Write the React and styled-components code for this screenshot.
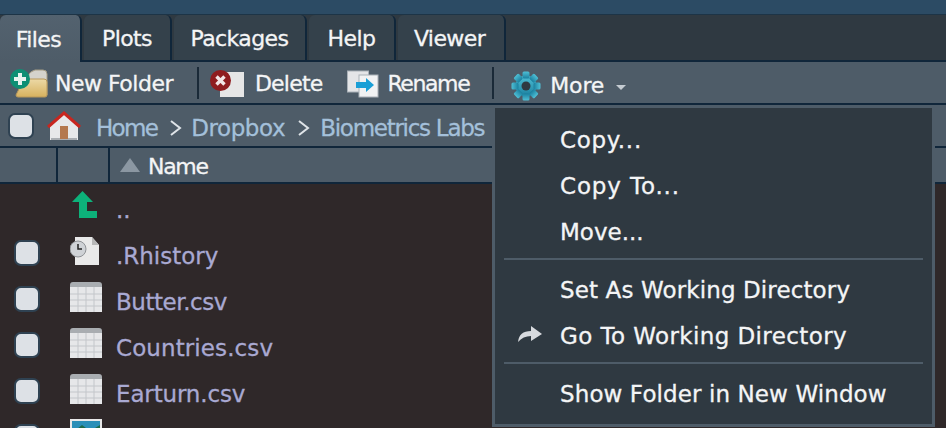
import React from "react";
import styled, { createGlobalStyle } from "styled-components";

const Global = createGlobalStyle`
  html, body { margin: 0; padding: 0; background: #2f2829; }
  * { box-sizing: border-box; }
`;

const Page = styled.div`
  position: relative;
  width: 946px;
  height: 428px;
  overflow: hidden;
  background: #2f2829;
  font-family: "DejaVu Sans", "Liberation Sans", sans-serif;
  font-size: 23px;
  color: #f4f5f6;
  -webkit-text-stroke: 0.3px currentColor;
`;
const TopBand = styled.div`
  height: 14px;
  background: #2c4b64;
  border-bottom: 1px solid #1d3446;
  box-sizing: content-box;
`;
const TabBar = styled.div`
  height: 47px;
  display: flex;
  gap: 2px;
  background: #2f3941;
  border-bottom: 2px solid #10263a;
`;
const Tab = styled.div`
  width: ${(p) => p.$w}px;
  height: ${(p) => (p.$active ? 47 : 45)}px;
  display: flex;
  align-items: center;
  justify-content: center;
  padding-top: 2px;
  padding-right: ${(p) => p.$pr || 0}px;
  border-radius: 6px 6px 0 0;
  background: ${(p) => (p.$active ? "linear-gradient(#53626f,#4e5c68)" : "#34414b")};
  border-right: 2px solid #10263a;
  font-size: 22px;
  letter-spacing: -0.6px;
  position: relative;
  z-index: 1;
`;
const Toolbar = styled.div`
  height: 43px;
  display: flex;
  align-items: center;
  padding-top: 2px;
  background: #4e5c68;
  border-bottom: 2px solid #10263a;
  font-size: 22px;
`;
const ToolItem = styled.div`
  display: flex;
  align-items: center;
  margin-left: ${(p) => p.$ml}px;
  margin-top: ${(p) => p.$mt || 0}px;
  gap: ${(p) => p.$gap}px;
  letter-spacing: ${(p) => p.$ls}px;
`;
const Divider = styled.div`
  width: 2px;
  height: 32px;
  margin-left: ${(p) => p.$ml}px;
  margin-top: -2px;
  background: #1a2a38;
`;
const Caret = styled.span`
  width: 0;
  height: 0;
  margin-left: 3px;
  margin-top: 4px;
  border-left: 5px solid transparent;
  border-right: 5px solid transparent;
  border-top: 5px solid #c5ccd2;
`;
const Crumbs = styled.div`
  height: 43px;
  display: flex;
  align-items: center;
  padding-left: 8px;
  background: #4e5c68;
  border-bottom: 2px solid #10263a;
  color: #a4c0da;
`;
const Check = styled.span`
  width: 26px;
  height: 26px;
  flex: none;
  border-radius: 7px;
  background: #dde1e6;
  border: 2px solid #2f4252;
`;
const CrumbLink = styled.span`
  margin-left: ${(p) => p.$ml}px;
  padding-top: 4px;
  letter-spacing: ${(p) => p.$ls}px;
`;
const Chevron = styled.svg`
  width: 14px;
  height: 18px;
  margin-left: 12px;
  margin-right: -3px;
  margin-top: 4px;
`;
const Header = styled.div`
  height: 36px;
  display: grid;
  grid-template-columns: 58px 52px 1fr;
  background: #4e5c68;
  border-bottom: 2px solid #10263a;
  font-size: 22px;
  letter-spacing: -1.3px;
`;
const HeaderCell = styled.div`
  display: flex;
  align-items: center;
  padding-left: 10px;
  padding-top: 3px;
  gap: 8px;
  border-right: ${(p) => (p.$last ? "none" : "2px solid #10263a")};
`;
const SortUp = styled.span`
  width: 0;
  height: 0;
  border-left: 10px solid transparent;
  border-right: 10px solid transparent;
  border-bottom: 14px solid #8b97a2;
  margin-top: -4px;
`;
const Row = styled.div`
  height: 46px;
  display: grid;
  grid-template-columns: 58px 58px 1fr;
  align-items: center;
`;
const CheckCell = styled.div`
  padding-left: 14px;
  display: flex;
`;
const IconCell = styled.div`
  display: flex;
  padding-left: 12px;
  margin-top: -5px;
`;
const FileName = styled.span`
  color: #a9a9d2;
  padding-top: 5px;
  letter-spacing: ${(p) => p.$ls}px;
`;
const Menu = styled.div`
  position: absolute;
  left: 492px;
  top: 106px;
  width: 443px;
  height: 321px;
  background: #2f3941;
  border: 3px solid #4e5c68;
  border-top-width: 2px;
  padding: 9px 9px 0;
  z-index: 5;
`;
const MenuItem = styled.div`
  height: 46px;
  display: flex;
  align-items: center;
  padding-left: 56px;
  position: relative;
  letter-spacing: ${(p) => p.$ls}px;
`;
const MenuIcon = styled.svg`
  position: absolute;
  left: 13px;
  top: 11px;
`;
const MenuSep = styled.div`
  height: 2px;
  margin: 3px 0 7px;
  background: #4e5c68;
`;

const NewFolderIcon = () => (
  <svg width="38" height="29" viewBox="0 0 38 29">
    <defs>
      <linearGradient id="folderG" x1="0" y1="0" x2="0" y2="1">
        <stop offset="0" stopColor="#ecd9a6" />
        <stop offset="1" stopColor="#d6b15e" />
      </linearGradient>
    </defs>
    <path d="M17 8q3-6 8-7h8q4 0 4 4v21H17z" fill="#d5d3cc" stroke="#a59c84" />
    <path d="M14 10H34q3 0 3 3v13q0 2-2 2H8q-2 0-2-2z" fill="url(#folderG)" stroke="#b8985a" />
    <circle cx="10" cy="10" r="10" fill="#0d8f74" />
    <path d="M10 4v12M4 10h12" stroke="#e6f2ee" strokeWidth="4" />
  </svg>
);
const DeleteIcon = () => (
  <svg width="34" height="28" viewBox="0 0 34 28">
    <rect x="10" y="2" width="24" height="25" fill="#e6e6e6" />
    <circle cx="10.5" cy="10.5" r="10.5" fill="#8f1d1f" />
    <path d="M6.5 6.5l8 8M14.5 6.5l-8 8" stroke="#f2e6e6" strokeWidth="3.4" />
  </svg>
);
const RenameIcon = () => (
  <svg width="32" height="28" viewBox="0 0 32 28">
    <rect x="0.5" y="1" width="21" height="21" fill="#e4e5e7" stroke="#aab1b8" />
    <rect x="12" y="5" width="19" height="22" fill="#f1f2f3" stroke="#aab1b8" />
    <path d="M9 12h10V8l8 7-8 7v-4H9z" fill="#1a9fd6" />
  </svg>
);
const GearIcon = () => (
  <svg width="30" height="30" viewBox="0 0 30 30">
    <defs>
      <linearGradient id="gearG" x1="0" y1="0" x2="0" y2="1">
        <stop offset="0" stopColor="#4fc0d6" />
        <stop offset="1" stopColor="#1a7f9e" />
      </linearGradient>
    </defs>
    <g fill="url(#gearG)">
      <circle cx="15" cy="15" r="10.5" />
      {[0, 45, 90, 135, 180, 225, 270, 315].map((a) => (
        <rect key={a} x="11.5" y="0.5" width="7" height="7" rx="1.5" transform={`rotate(${a} 15 15)`} />
      ))}
    </g>
    <circle cx="15" cy="15" r="4.5" fill="#2f3941" />
  </svg>
);
const HomeIcon = () => (
  <svg width="34" height="30" viewBox="0 0 34 30" style={{ marginLeft: 13, flex: "none" }}>
    <path d="M3 15L17 3l14 12v14H3z" fill="#e7e8ea" />
    <rect x="4" y="27" width="26" height="2" fill="#a9adb2" />
    <path d="M1 16L17 2l16 14" fill="none" stroke="#c8261f" strokeWidth="3" />
    <rect x="13" y="15" width="8" height="13" fill="#b4784e" />
  </svg>
);
const UpIcon = () => (
  <svg width="28" height="28" viewBox="0 0 28 28">
    <path d="M2 11L12.5 0 23 11h-6v9h10v7H9V11z" fill="#0db27a" />
  </svg>
);
const HistoryIcon = () => (
  <svg width="30" height="30" viewBox="0 0 30 30">
    <path d="M5 1h17l7 8v20H5z" fill="#e9e9e9" />
    <path d="M22 1v8h7z" fill="#b7b7b7" />
    <circle cx="8" cy="13" r="8" fill="#cfd2d6" stroke="#8f9296" />
    <path d="M8 8v5h4" fill="none" stroke="#222" strokeWidth="1.5" />
  </svg>
);
const CsvIcon = () => (
  <svg width="32" height="31" viewBox="0 0 32 31">
    <path d="M0 4q0-3 3-3h26q3 0 3 3v5H0z" fill="#a9adb1" />
    <rect x="0" y="6" width="32" height="25" fill="#e6e7e9" />
    <path d="M8 6v25M16 6v25M24 6v25M0 13h32M0 19h32M0 25h32" stroke="#c3c6ca" strokeWidth="1" />
  </svg>
);
const ImageIcon = () => (
  <svg width="32" height="31" viewBox="0 0 32 31">
    <rect width="32" height="31" fill="#e8e8e8" />
    <rect x="2" y="2" width="28" height="27" fill="#2a8fb8" />
    <path d="M2 14l10-8 8 6 10-6v8H2z" fill="#1d6a4a" />
  </svg>
);
const ChevronMark = () => (
  <Chevron viewBox="0 0 14 18">
    <path d="M2 2l9 7-9 7" fill="none" stroke="#dfe4e8" strokeWidth="2" />
  </Chevron>
);
const ArrowMark = () => (
  <MenuIcon width="26" height="20" viewBox="0 0 26 20">
    <path d="M1 18q1-11 13-11V2l11 8-11 7v-5q-8 0-13 6z" fill="#d7dade" />
  </MenuIcon>
);

const files = [
  { name: "..", icon: <UpIcon />, noCheck: true, ls: 0 },
  { name: ".Rhistory", icon: <HistoryIcon />, ls: 0 },
  { name: "Butter.csv", icon: <CsvIcon />, ls: -0.45 },
  { name: "Countries.csv", icon: <CsvIcon />, ls: 0.1 },
  { name: "Earturn.csv", icon: <CsvIcon />, ls: -0.15 },
  { name: "", icon: <ImageIcon />, ls: 0 },
];

export default function App() {
  return (
    <Page>
      <Global />
      <TopBand />
      <TabBar>
        <Tab $active $w={82} $pr={3}>Files</Tab>
        <Tab $w={88}>Plots</Tab>
        <Tab $w={133}>Packages</Tab>
        <Tab $w={87}>Help</Tab>
        <Tab $w={108} $pr={3}>Viewer</Tab>
      </TabBar>
      <Toolbar>
        <ToolItem $ml={10} $gap={7} $ls={-0.5}><NewFolderIcon />New Folder</ToolItem>
        <Divider $ml={24} />
        <ToolItem $ml={11} $gap={11} $ls={-0.8}><DeleteIcon />Delete</ToolItem>
        <ToolItem $ml={25} $gap={8} $ls={-1.4}><RenameIcon />Rename</ToolItem>
        <Divider $ml={23} />
        <ToolItem $ml={17} $gap={9} $ls={-0.15} $mt={4}><GearIcon />More<Caret /></ToolItem>
      </Toolbar>
      <Crumbs>
        <Check />
        <HomeIcon />
        <CrumbLink $ml={15} $ls={-1.7}>Home</CrumbLink>
        <ChevronMark />
        <CrumbLink $ml={11} $ls={-0.4}>Dropbox</CrumbLink>
        <ChevronMark />
        <CrumbLink $ml={12} $ls={-1.27}>Biometrics Labs</CrumbLink>
      </Crumbs>
      <Header>
        <HeaderCell />
        <HeaderCell />
        <HeaderCell $last><SortUp />Name</HeaderCell>
      </Header>
      {files.map((f, i) => (
        <Row key={i}>
          <CheckCell>{!f.noCheck && <Check />}</CheckCell>
          <IconCell>{f.icon}</IconCell>
          <FileName $ls={f.ls}>{f.name}</FileName>
        </Row>
      ))}
      <Menu>
        <MenuItem $ls={0.7}>Copy...</MenuItem>
        <MenuItem $ls={0.85}>Copy To...</MenuItem>
        <MenuItem $ls={0}>Move...</MenuItem>
        <MenuSep />
        <MenuItem $ls={0.12}>Set As Working Directory</MenuItem>
        <MenuItem $ls={0.4}><ArrowMark />Go To Working Directory</MenuItem>
        <MenuSep />
        <MenuItem $ls={0.1}>Show Folder in New Window</MenuItem>
      </Menu>
    </Page>
  );
}
